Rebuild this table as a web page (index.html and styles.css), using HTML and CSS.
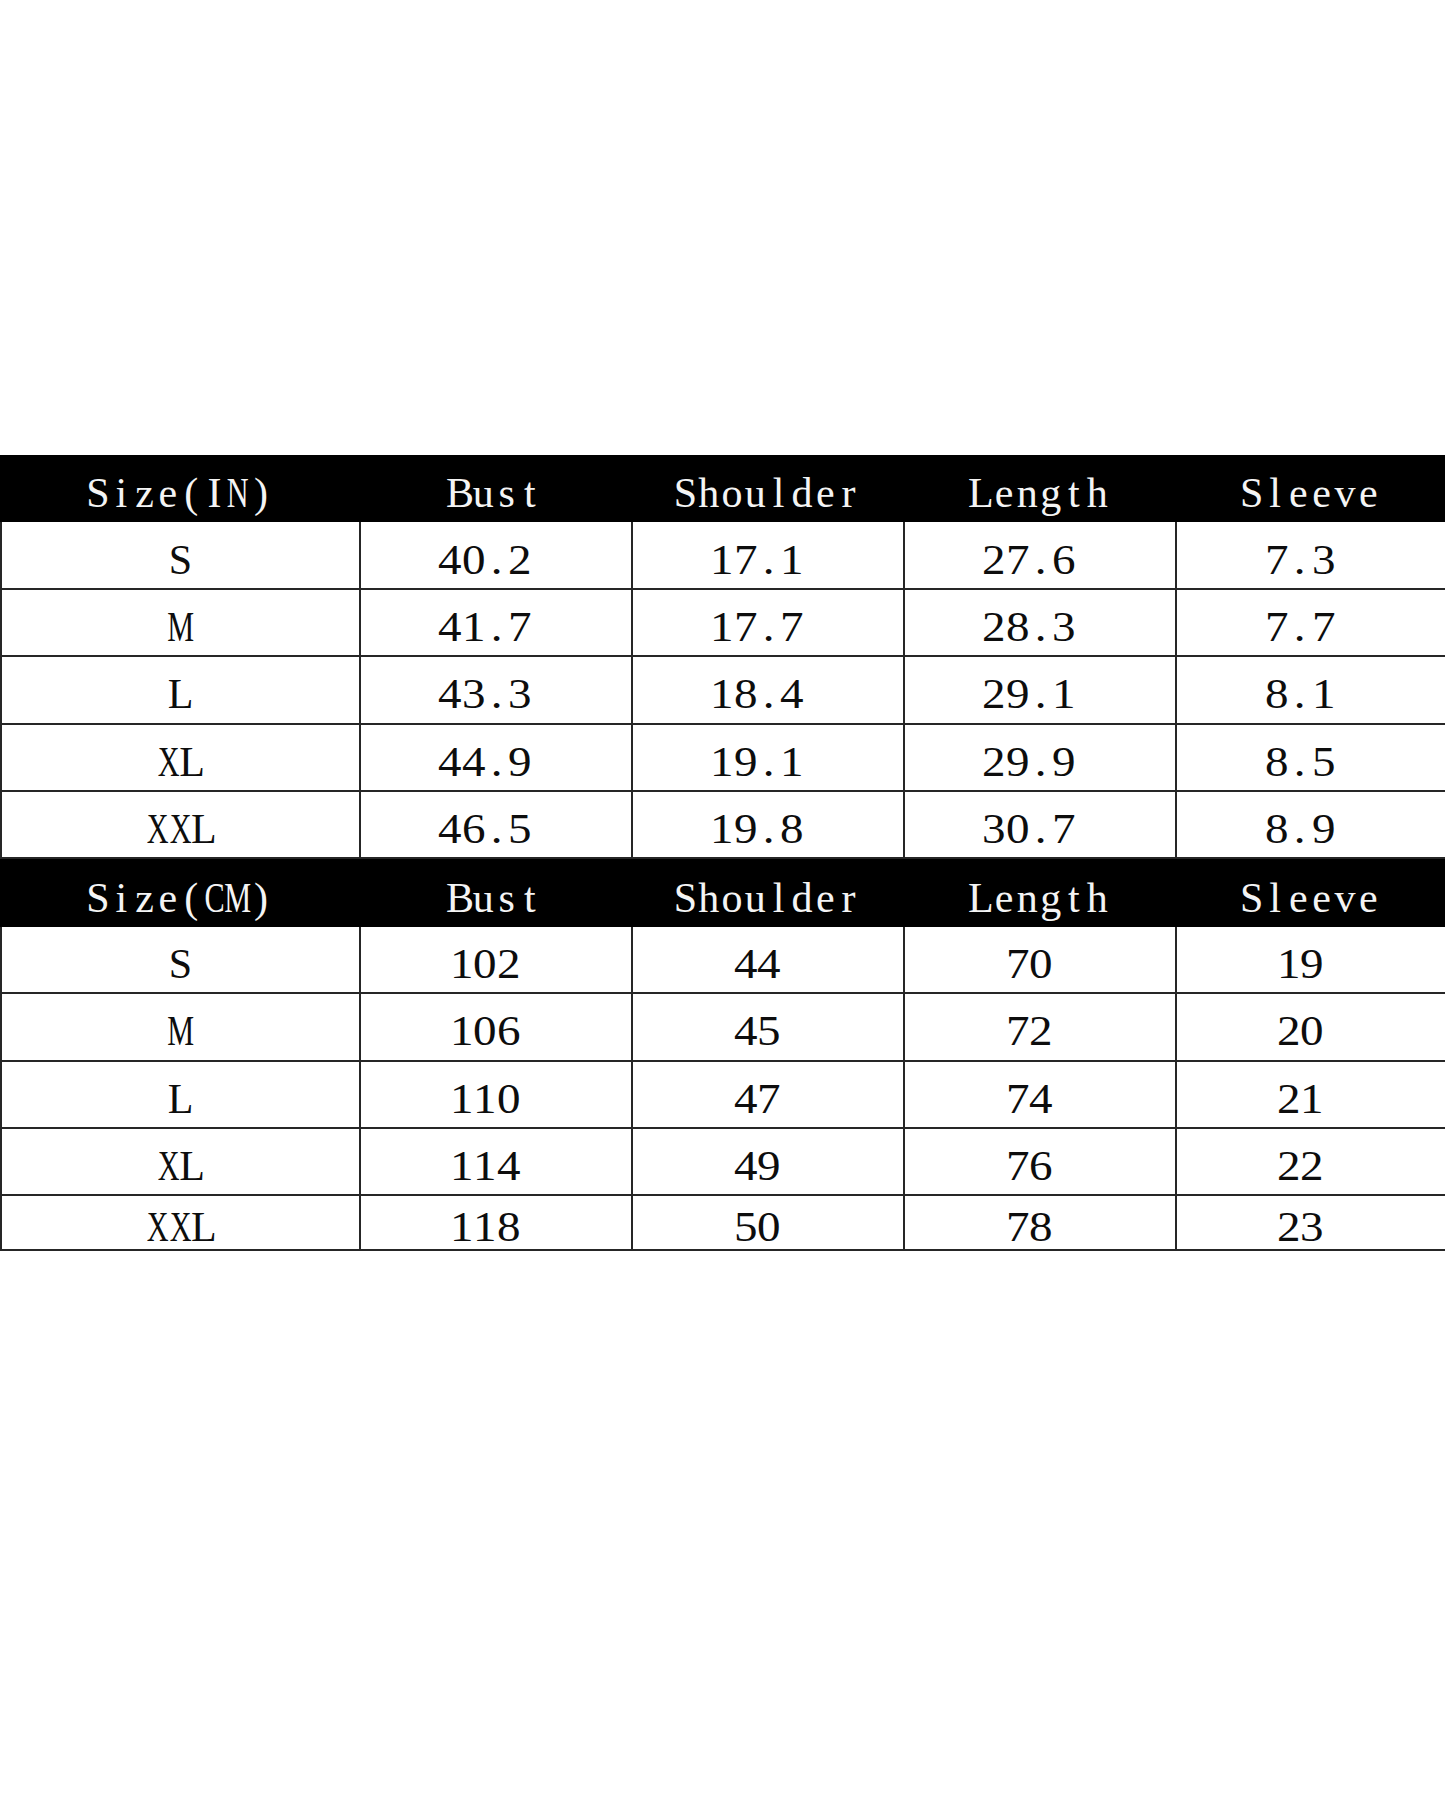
FILE: index.html
```html
<!DOCTYPE html>
<html lang="en">
<head>
<meta charset="utf-8">
<title>Size Chart</title>
<link rel="stylesheet" href="styles.css">
</head>
<body>
<div class="page">
  <div class="chart">
    <div class="row head">
      <div class="cell"><span class="c">S</span><span class="c">i</span><span class="c">z</span><span class="c">e</span><span class="c">(</span><span class="c">I</span><span class="c w">N</span><span class="c">)</span></div>
      <div class="cell"><span class="c">B</span><span class="c">u</span><span class="c">s</span><span class="c">t</span></div>
      <div class="cell"><span class="c">S</span><span class="c">h</span><span class="c">o</span><span class="c">u</span><span class="c">l</span><span class="c">d</span><span class="c">e</span><span class="c">r</span></div>
      <div class="cell"><span class="c">L</span><span class="c">e</span><span class="c">n</span><span class="c">g</span><span class="c">t</span><span class="c">h</span></div>
      <div class="cell"><span class="c">S</span><span class="c">l</span><span class="c">e</span><span class="c">e</span><span class="c">v</span><span class="c">e</span></div>
    </div>
    <div class="row data">
      <div class="cell"><span class="c">S</span></div>
      <div class="cell num"><span class="c">4</span><span class="c">0</span><span class="c">.</span><span class="c">2</span></div>
      <div class="cell num"><span class="c">1</span><span class="c">7</span><span class="c">.</span><span class="c">1</span></div>
      <div class="cell num"><span class="c">2</span><span class="c">7</span><span class="c">.</span><span class="c">6</span></div>
      <div class="cell num"><span class="c">7</span><span class="c">.</span><span class="c">3</span></div>
    </div>
    <div class="row data">
      <div class="cell"><span class="c w">M</span></div>
      <div class="cell num"><span class="c">4</span><span class="c">1</span><span class="c">.</span><span class="c">7</span></div>
      <div class="cell num"><span class="c">1</span><span class="c">7</span><span class="c">.</span><span class="c">7</span></div>
      <div class="cell num"><span class="c">2</span><span class="c">8</span><span class="c">.</span><span class="c">3</span></div>
      <div class="cell num"><span class="c">7</span><span class="c">.</span><span class="c">7</span></div>
    </div>
    <div class="row data">
      <div class="cell"><span class="c">L</span></div>
      <div class="cell num"><span class="c">4</span><span class="c">3</span><span class="c">.</span><span class="c">3</span></div>
      <div class="cell num"><span class="c">1</span><span class="c">8</span><span class="c">.</span><span class="c">4</span></div>
      <div class="cell num"><span class="c">2</span><span class="c">9</span><span class="c">.</span><span class="c">1</span></div>
      <div class="cell num"><span class="c">8</span><span class="c">.</span><span class="c">1</span></div>
    </div>
    <div class="row data">
      <div class="cell"><span class="c w">X</span><span class="c">L</span></div>
      <div class="cell num"><span class="c">4</span><span class="c">4</span><span class="c">.</span><span class="c">9</span></div>
      <div class="cell num"><span class="c">1</span><span class="c">9</span><span class="c">.</span><span class="c">1</span></div>
      <div class="cell num"><span class="c">2</span><span class="c">9</span><span class="c">.</span><span class="c">9</span></div>
      <div class="cell num"><span class="c">8</span><span class="c">.</span><span class="c">5</span></div>
    </div>
    <div class="row data">
      <div class="cell"><span class="c w">X</span><span class="c w">X</span><span class="c">L</span></div>
      <div class="cell num"><span class="c">4</span><span class="c">6</span><span class="c">.</span><span class="c">5</span></div>
      <div class="cell num"><span class="c">1</span><span class="c">9</span><span class="c">.</span><span class="c">8</span></div>
      <div class="cell num"><span class="c">3</span><span class="c">0</span><span class="c">.</span><span class="c">7</span></div>
      <div class="cell num"><span class="c">8</span><span class="c">.</span><span class="c">9</span></div>
    </div>

    <div class="row head">
      <div class="cell"><span class="c">S</span><span class="c">i</span><span class="c">z</span><span class="c">e</span><span class="c">(</span><span class="c w">C</span><span class="c w">M</span><span class="c">)</span></div>
      <div class="cell"><span class="c">B</span><span class="c">u</span><span class="c">s</span><span class="c">t</span></div>
      <div class="cell"><span class="c">S</span><span class="c">h</span><span class="c">o</span><span class="c">u</span><span class="c">l</span><span class="c">d</span><span class="c">e</span><span class="c">r</span></div>
      <div class="cell"><span class="c">L</span><span class="c">e</span><span class="c">n</span><span class="c">g</span><span class="c">t</span><span class="c">h</span></div>
      <div class="cell"><span class="c">S</span><span class="c">l</span><span class="c">e</span><span class="c">e</span><span class="c">v</span><span class="c">e</span></div>
    </div>
    <div class="row data">
      <div class="cell"><span class="c">S</span></div>
      <div class="cell num"><span class="c">1</span><span class="c">0</span><span class="c">2</span></div>
      <div class="cell num"><span class="c">4</span><span class="c">4</span></div>
      <div class="cell num"><span class="c">7</span><span class="c">0</span></div>
      <div class="cell num"><span class="c">1</span><span class="c">9</span></div>
    </div>
    <div class="row data">
      <div class="cell"><span class="c w">M</span></div>
      <div class="cell num"><span class="c">1</span><span class="c">0</span><span class="c">6</span></div>
      <div class="cell num"><span class="c">4</span><span class="c">5</span></div>
      <div class="cell num"><span class="c">7</span><span class="c">2</span></div>
      <div class="cell num"><span class="c">2</span><span class="c">0</span></div>
    </div>
    <div class="row data">
      <div class="cell"><span class="c">L</span></div>
      <div class="cell num"><span class="c">1</span><span class="c">1</span><span class="c">0</span></div>
      <div class="cell num"><span class="c">4</span><span class="c">7</span></div>
      <div class="cell num"><span class="c">7</span><span class="c">4</span></div>
      <div class="cell num"><span class="c">2</span><span class="c">1</span></div>
    </div>
    <div class="row data">
      <div class="cell"><span class="c w">X</span><span class="c">L</span></div>
      <div class="cell num"><span class="c">1</span><span class="c">1</span><span class="c">4</span></div>
      <div class="cell num"><span class="c">4</span><span class="c">9</span></div>
      <div class="cell num"><span class="c">7</span><span class="c">6</span></div>
      <div class="cell num"><span class="c">2</span><span class="c">2</span></div>
    </div>
    <div class="row data last">
      <div class="cell"><span class="c w">X</span><span class="c w">X</span><span class="c">L</span></div>
      <div class="cell num"><span class="c">1</span><span class="c">1</span><span class="c">8</span></div>
      <div class="cell num"><span class="c">5</span><span class="c">0</span></div>
      <div class="cell num"><span class="c">7</span><span class="c">8</span></div>
      <div class="cell num"><span class="c">2</span><span class="c">3</span></div>
    </div>
  </div>
</div>
</body>
</html>
```
FILE: styles.css
```css
html, body {
  margin: 0;
  padding: 0;
  background: #ffffff;
}

.page {
  width: 1445px;
  height: 1808px;
  padding-top: 455px;
  box-sizing: border-box;
  font-family: "Liberation Serif", "Times New Roman", serif;
  font-size: 42px;
  color: #0d0d0d;
}

.chart {
  display: flex;
  flex-direction: column;
}

.row {
  display: grid;
  grid-template-columns: 359px 272px 272px 272px 1fr;
  height: 67.4px;
  box-sizing: border-box;
}

.head {
  background: #000000;
  color: #f4f4f4;
}

.data {
  border-bottom: 2px solid #262626;
}

.data.last {
  height: 55px;
}

.cell {
  display: flex;
  align-items: center;
  justify-content: center;
  padding-top: 9px;
  box-sizing: border-box;
  line-height: 1;
  white-space: nowrap;
}

.data .cell {
  border-left: 2px solid #262626;
}

.data .num {
  padding-right: 22px;
}

.c {
  display: inline-flex;
  justify-content: center;
  width: 23.3px;
}

.num .c {
  transform: scaleX(1.12);
}

.w {
  transform: scaleX(0.72);
}
```
